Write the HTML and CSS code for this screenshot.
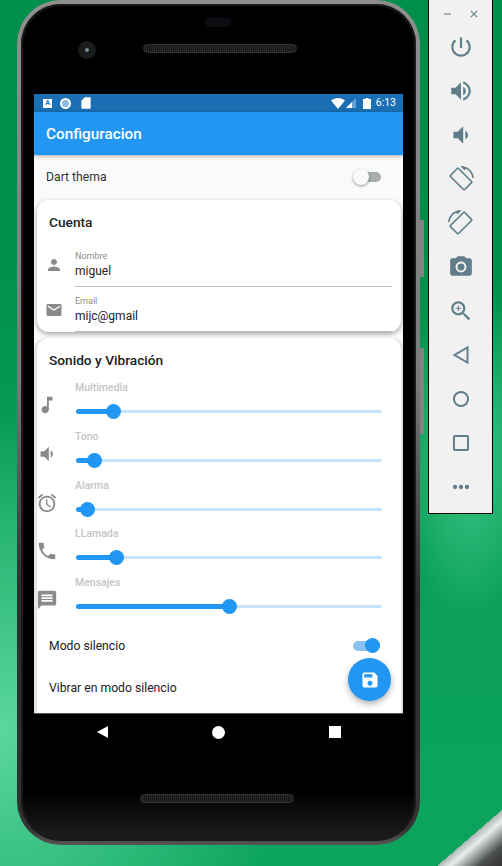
FILE: index.html
```html
<!DOCTYPE html>
<html lang="en">
<head>
    <meta charset="UTF-8">
    <meta name="viewport" content="width=device-width, initial-scale=1.0">
    <title>Configuracion</title>
    <link rel="stylesheet" href="styles.css">
</head>
<body>

<div class="desktop">
    <div class="metal"></div>

    <div class="phone">
        <div class="side-key key-top"></div>
        <div class="side-key key-volume"></div>

        <div class="phone-body">
            <div class="bezel-top">
                <div class="sensor"></div>
                <div class="camera"><span></span></div>
                <div class="grille"></div>
            </div>

            <div class="screen">
                <div class="status-bar">
                    <div class="status-left">
                        <span class="status-a">A</span>
                        <span class="status-dot"></span>
                        <svg class="status-icon" viewBox="0 0 24 24"><path fill="#fff" d="M18 2h-8L4 8v12c0 1.100.9 2 2 2h12c1.100 0 2-.9 2-2V4c0-1.100-.9-2-2-2z"/></svg>
                    </div>
                    <div class="status-right">
                        <svg class="status-wifi" viewBox="0 0 14 11"><path fill="#fff" d="M7 11L0 2.600C2 1 4.400 0 7 0s5 1 7 2.600z"/></svg>
                        <svg class="status-signal" viewBox="0 0 10 10"><path fill="#64a3dc" d="M10 0v10H0z"/><path fill="#fff" d="M6 4v6H0z"/></svg>
                        <svg class="status-battery" viewBox="0 0 8 11"><path fill="#fff" d="M2.500 0h3v1H8v10H0V1h2.500z"/></svg>
                        <span class="status-time">6:13</span>
                    </div>
                </div>

                <div class="app-bar">Configuracion</div>

                <div class="content">
                    <div class="theme-row">
                        <span>Dart thema</span>
                        <div class="switch switch-off"><span></span></div>
                    </div>

                    <div class="card card-account">
                        <h3 class="card-title">Cuenta</h3>
                        <div class="field">
                            <svg class="field-icon" viewBox="0 0 24 24"><path d="M12 12c2.210 0 4-1.790 4-4s-1.790-4-4-4-4 1.790-4 4 1.790 4 4 4zm0 2c-2.670 0-8 1.340-8 4v2h16v-2c0-2.660-5.330-4-8-4z"/></svg>
                            <div class="field-text">
                                <label>Nombre</label>
                                <div class="field-value">miguel</div>
                            </div>
                        </div>
                        <div class="field">
                            <svg class="field-icon" viewBox="0 0 24 24"><path d="M20 4H4c-1.100 0-1.990.9-1.990 2L2 18c0 1.100.9 2 2 2h16c1.100 0 2-.9 2-2V6c0-1.100-.9-2-2-2zm0 4l-8 5-8-5V6l8 5 8-5v2z"/></svg>
                            <div class="field-text">
                                <label>Email</label>
                                <div class="field-value">mijc@gmail</div>
                            </div>
                        </div>
                    </div>

                    <div class="card card-sound">
                        <h3 class="card-title">Sonido y Vibración</h3>

                        <div class="volume">
                            <svg class="volume-icon" viewBox="0 0 24 24"><path d="M12 3v10.550c-.59-.34-1.270-.55-2-.55-2.210 0-4 1.790-4 4s1.790 4 4 4 4-1.790 4-4V7h4V3h-6z"/></svg>
                            <div class="volume-main">
                                <label>Multimedia</label>
                                <div class="slider"><div class="slider-fill" style="width:12.1%"><span></span></div></div>
                            </div>
                        </div>
                        <div class="volume">
                            <svg class="volume-icon" viewBox="0 0 24 24"><path d="M18.500 12c0-1.770-1.020-3.290-2.500-4.030v8.050c1.480-.73 2.500-2.250 2.500-4.020zM5 9v6h4l5 5V4L9 9H5z"/></svg>
                            <div class="volume-main">
                                <label>Tono</label>
                                <div class="slider"><div class="slider-fill" style="width:6.2%"><span></span></div></div>
                            </div>
                        </div>
                        <div class="volume">
                            <svg class="volume-icon" viewBox="0 0 24 24"><path d="M22 5.720l-4.600-3.860-1.290 1.530 4.600 3.860L22 5.720zM7.880 3.390L6.600 1.860 2 5.710l1.290 1.530 4.590-3.850zM12.500 8H11v6l4.750 2.850.75-1.230-4-2.370V8zM12 4c-4.970 0-9 4.030-9 9s4.020 9 9 9c4.970 0 9-4.030 9-9s-4.030-9-9-9zm0 16c-3.870 0-7-3.130-7-7s3.130-7 7-7 7 3.130 7 7-3.130 7-7 7z"/></svg>
                            <div class="volume-main">
                                <label>Alarma</label>
                                <div class="slider"><div class="slider-fill" style="width:3.9%"><span></span></div></div>
                            </div>
                        </div>
                        <div class="volume">
                            <svg class="volume-icon" viewBox="0 0 24 24"><path d="M6.620 10.790c1.440 2.830 3.760 5.140 6.590 6.590l2.200-2.200c.27-.27.67-.36 1.020-.24 1.120.37 2.330.57 3.570.57.55 0 1 .45 1 1V20c0 .55-.45 1-1 1-9.390 0-17-7.610-17-17 0-.55.45-1 1-1h3.500c.55 0 1 .45 1 1 0 1.250.2 2.450.57 3.570.11.35.03.74-.25 1.020l-2.200 2.200z"/></svg>
                            <div class="volume-main">
                                <label>LLamada</label>
                                <div class="slider"><div class="slider-fill" style="width:13.1%"><span></span></div></div>
                            </div>
                        </div>
                        <div class="volume">
                            <svg class="volume-icon" viewBox="0 0 24 24"><path d="M20 2H4c-1.100 0-1.990.9-1.990 2L2 22l4-4h14c1.100 0 2-.9 2-2V4c0-1.100-.9-2-2-2zm-2 12H6v-2h12v2zm0-3H6V9h12v2zm0-3H6V6h12v2z"/></svg>
                            <div class="volume-main">
                                <label>Mensajes</label>
                                <div class="slider"><div class="slider-fill" style="width:50%"><span></span></div></div>
                            </div>
                        </div>

                        <div class="toggle-row">
                            <span>Modo silencio</span>
                            <div class="switch switch-on"><span></span></div>
                        </div>
                        <div class="toggle-row">
                            <span>Vibrar en modo silencio</span>
                        </div>
                    </div>

                    <button class="fab" type="button">
                        <svg viewBox="0 0 24 24"><path fill="#fff" d="M17 3H5c-1.110 0-2 .9-2 2v14c0 1.100.89 2 2 2h14c1.100 0 2-.9 2-2V7l-4-4zm-5 16c-1.660 0-3-1.340-3-3s1.340-3 3-3 3 1.340 3 3-1.340 3-3 3zm3-10H5V5h10v4z"/></svg>
                    </button>
                </div>
            </div>

            <div class="bezel-bottom">
                <div class="nav-buttons">
                    <span class="nav-back"></span>
                    <span class="nav-home"></span>
                    <span class="nav-recent"></span>
                </div>
                <div class="grille grille-bottom"></div>
            </div>
        </div>
    </div>

    <div class="toolbar">
        <div class="toolbar-head">
            <span class="toolbar-min"></span>
            <svg class="toolbar-close" viewBox="0 0 10 10"><path d="M1 1l8 8M9 1l-8 8"/></svg>
        </div>
        <svg class="tool" viewBox="0 0 24 24"><path d="M13 3h-2v10h2V3zm4.830 2.170l-1.420 1.420C17.990 7.860 19 9.810 19 12c0 3.870-3.130 7-7 7s-7-3.130-7-7c0-2.190 1.010-4.140 2.580-5.420L6.170 5.170C4.230 6.820 3 9.260 3 12c0 4.970 4.030 9 9 9s9-4.030 9-9c0-2.740-1.230-5.180-3.170-6.830z"/></svg>
        <svg class="tool" viewBox="0 0 24 24"><path d="M3 9v6h4l5 5V4L7 9H3zm13.500 3c0-1.770-1.020-3.290-2.500-4.030v8.050c1.480-.73 2.500-2.250 2.500-4.020zM14 3.230v2.060c2.890.86 5 3.540 5 6.710s-2.110 5.850-5 6.710v2.060c4.010-.91 7-4.490 7-8.770s-2.990-7.860-7-8.770z"/></svg>
        <svg class="tool" viewBox="0 0 24 24"><path d="M18.500 12c0-1.770-1.020-3.290-2.500-4.030v8.050c1.480-.73 2.500-2.250 2.500-4.020zM5 9v6h4l5 5V4L9 9H5z"/></svg>
        <svg class="tool" viewBox="0 0 24 24"><path d="M16.480 2.520c3.270 1.550 5.610 4.720 5.970 8.480h1.500C23.440 4.840 18.290 0 12 0l-.66.03 3.810 3.810 1.330-1.320zm-6.250-.77c-.59-.59-1.540-.59-2.120 0L1.750 8.110c-.59.59-.59 1.540 0 2.120l12.020 12.020c.59.59 1.540.59 2.120 0l6.360-6.360c.59-.59.59-1.540 0-2.120L10.230 1.750zm4.600 19.440L2.810 9.170l6.360-6.360 12.020 12.020-6.360 6.360z"/></svg>
        <svg class="tool tool-flip" viewBox="0 0 24 24"><path d="M16.480 2.520c3.270 1.550 5.610 4.720 5.970 8.480h1.500C23.440 4.840 18.290 0 12 0l-.66.03 3.810 3.810 1.330-1.320zm-6.250-.77c-.59-.59-1.540-.59-2.120 0L1.750 8.110c-.59.59-.59 1.540 0 2.120l12.020 12.020c.59.59 1.540.59 2.120 0l6.360-6.360c.59-.59.59-1.540 0-2.120L10.230 1.750zm4.600 19.440L2.810 9.170l6.360-6.360 12.020 12.020-6.360 6.360z"/></svg>
        <svg class="tool" viewBox="0 0 24 24"><circle cx="12" cy="12" r="3.200"/><path d="M9 2L7.170 4H4c-1.100 0-2 .9-2 2v12c0 1.100.9 2 2 2h16c1.100 0 2-.9 2-2V6c0-1.100-.9-2-2-2h-3.170L15 2H9zm3 15c-2.760 0-5-2.240-5-5s2.240-5 5-5 5 2.240 5 5-2.240 5-5 5z"/></svg>
        <svg class="tool" viewBox="0 0 24 24"><path d="M15.500 14h-.79l-.28-.27C15.410 12.590 16 11.110 16 9.500 16 5.910 13.090 3 9.500 3S3 5.910 3 9.500 5.910 16 9.500 16c1.610 0 3.090-.59 4.230-1.570l.27.28v.79l5 4.990L20.490 19l-4.990-5zm-6 0C7.010 14 5 11.990 5 9.500S7.010 5 9.500 5 14 7.010 14 9.500 11.990 14 9.500 14zM12 10h-2v2H9v-2H7V9h2V7h1v2h2v1z"/></svg>
        <svg class="tool tool-line" viewBox="0 0 24 24"><path d="M18 5v14L6 12z"/></svg>
        <svg class="tool tool-line" viewBox="0 0 24 24"><circle cx="12" cy="12" r="6.500"/></svg>
        <svg class="tool tool-line" viewBox="0 0 24 24"><rect x="5.500" y="5.500" width="13" height="13" rx="1"/></svg>
        <svg class="tool" viewBox="0 0 24 24"><circle cx="6.500" cy="12" r="2"/><circle cx="12" cy="12" r="2"/><circle cx="17.500" cy="12" r="2"/></svg>
    </div>
</div>

</body>
</html>
```

FILE: styles.css
```css
html, body {
    margin: 0;
    padding: 0;
}

body {
    font-family: Roboto, "Liberation Sans", sans-serif;
}

.desktop {
    position: relative;
    width: 502px;
    height: 866px;
    overflow: hidden;
    background:
        radial-gradient(ellipse 70px 170px at 470px 450px, rgba(72, 204, 144, 0.9) 0%, rgba(72, 204, 144, 0) 100%),
        radial-gradient(ellipse 290px 320px at 0 730px, #5ad79c 0%, rgba(90, 215, 156, 0) 100%),
        linear-gradient(#008f4a 0%, #008f4a 28%, #0a9f58 60%, #0ca45d 100%);
}

.metal {
    position: absolute;
    right: 0;
    bottom: 0;
    width: 65px;
    height: 56px;
    background: linear-gradient(to bottom right, transparent 50%, #aeb6b4 50%, #e8eded 60%, #8f9795 72%, #4a4e4d 82%, #333 100%);
}

/* phone */
.phone {
    position: absolute;
    left: 17px;
    top: 0;
    width: 403px;
    height: 845px;
    box-sizing: border-box;
    padding: 4px;
    background: linear-gradient(#8f8f8f 0%, #7a7a7a 45%, #2e2e2e 70%, #333 98%, #555 100%);
    border-radius: 44px;
}

.phone-body {
    height: 100%;
    display: flex;
    flex-direction: column;
    background: linear-gradient(#000 0%, #000 94%, #1e1e1e 100%);
    border-radius: 40px;
    box-shadow: inset 0 0 0 2px #1a1a1a;
    overflow: hidden;
}

.side-key {
    position: absolute;
    right: -4px;
    width: 4px;
    background: #808583;
}

.key-top {
    top: 220px;
    height: 57px;
}

.key-volume {
    top: 348px;
    height: 86px;
}

.bezel-top {
    position: relative;
    height: 90px;
    flex: none;
}

.sensor {
    position: absolute;
    left: 184px;
    top: 14px;
    width: 27px;
    height: 9px;
    border-radius: 5px;
    background: #0b0d12;
}

.camera {
    position: absolute;
    left: 57px;
    top: 37px;
    width: 18px;
    height: 18px;
    border-radius: 50%;
    background: #1b1c1e;
    display: flex;
    align-items: center;
    justify-content: center;
}

.camera span {
    width: 4px;
    height: 4px;
    border-radius: 50%;
    background: #6f8d99;
}

.grille {
    position: absolute;
    left: 122px;
    top: 40px;
    width: 154px;
    height: 9px;
    border-radius: 5px;
    background: repeating-linear-gradient(90deg, #2a2a2a 0, #2a2a2a 1px, #151515 1px, #151515 2px);
    border: 1px solid #333;
    box-sizing: border-box;
}

.screen {
    width: 369px;
    height: 619px;
    margin-left: 13px;
    flex: none;
    display: flex;
    flex-direction: column;
    overflow: hidden;
    background: #fafafa;
    box-shadow: 0 1px 0 #555;
}

.status-bar {
    height: 18px;
    flex: none;
    padding: 0 7px 0 9px;
    display: flex;
    align-items: center;
    justify-content: space-between;
    background: #1a6fb5;
}

.status-left,
.status-right {
    display: flex;
    align-items: center;
}

.status-left {
    gap: 7px;
}

.status-a {
    width: 9px;
    height: 9px;
    background: #fff;
    color: #1a6fb5;
    font-size: 7px;
    font-weight: 700;
    line-height: 9px;
    text-align: center;
}

.status-dot {
    width: 7px;
    height: 7px;
    margin-left: 1px;
    border: 2px solid #fff;
    border-radius: 50%;
    background: #8db9e2;
}

.status-icon {
    width: 14px;
    height: 14px;
    margin-left: 1px;
}

.status-wifi {
    width: 14px;
    height: 11px;
}

.status-signal {
    width: 10px;
    height: 10px;
    margin-left: 1px;
}

.status-battery {
    width: 8px;
    height: 11px;
    margin-left: 7px;
}

.status-time {
    margin-left: 5px;
    color: #fff;
    font-size: 10.5px;
    line-height: 18px;
}

.app-bar {
    height: 43px;
    flex: none;
    position: relative;
    padding-left: 12px;
    color: #fff;
    font-size: 15.3px;
    font-weight: 500;
    line-height: 45px;
    background: #2196f3;
    box-shadow: 0 1px 4px rgba(0, 0, 0, 0.35);
}

.content {
    position: relative;
    flex: 1;
    overflow: hidden;
}

.theme-row {
    height: 43px;
    margin-bottom: 2px;
    padding: 0 22px 0 12px;
    display: flex;
    align-items: center;
    justify-content: space-between;
    color: #333;
    font-size: 12.2px;
}

/* switches */
.switch {
    position: relative;
    width: 27px;
    height: 10px;
    border-radius: 5px;
}

.switch span {
    position: absolute;
    top: -3px;
    border-radius: 50%;
}

.switch-off {
    background: #a8adad;
}

.switch-off span {
    left: -1px;
    width: 16px;
    height: 16px;
    background: #fafafa;
    box-shadow: 0 1px 3px rgba(0, 0, 0, 0.4);
}

.switch-on {
    background: #8cc2ef;
}

.switch-on span {
    right: 0;
    top: -2.5px;
    width: 15px;
    height: 15px;
    background: #2196f3;
}

/* cards */
.card {
    margin: 0 2px 0 3px;
    background: #fff;
    border-radius: 12px;
}

.card-account {
    height: 132px;
    box-shadow: 0 2px 5px rgba(0, 0, 0, 0.35);
}

.card-sound {
    margin-top: 6px;
    height: 420px;
    border-radius: 12px 12px 0 0;
    box-shadow: -3px 0 0 #e4e4e4, 3px 0 0 #e4e4e4;
}

.card-title {
    margin: 0;
    padding: 14px 0 12px 12px;
    color: #212121;
    font-size: 13.7px;
    font-weight: 500;
    line-height: 16px;
}

.card-sound .card-title {
    padding-bottom: 13px;
}

.field {
    display: flex;
    align-items: center;
    height: 45px;
    padding-right: 9px;
}

.field-icon {
    width: 18px;
    height: 18px;
    margin: 0 12px 0 8px;
    fill: #8a8a8a;
    flex: none;
}

.field-text {
    flex: 1;
    height: 45px;
    box-sizing: border-box;
    padding-top: 9px;
    border-bottom: 1px solid #bdbdbd;
}

.field-text label {
    display: block;
    color: #8c8c8c;
    font-size: 9px;
    line-height: 11px;
}

.field-value {
    margin-top: 1px;
    color: #212121;
    font-size: 12px;
    line-height: 16px;
}

/* sliders */
.volume {
    display: flex;
    height: 48.75px;
    padding-right: 19px;
}

.volume-icon {
    width: 22px;
    height: 22px;
    margin: 13px 17px 0 -1px;
    fill: #8a8a8a;
    flex: none;
}

.volume-main {
    flex: 1;
}

.volume-main label {
    display: block;
    color: #c4c4c4;
    font-size: 10.5px;
    font-weight: 500;
    line-height: 14px;
}

.slider {
    height: 3px;
    margin: 15px 0 0 1px;
    border-radius: 2px;
    background: #c5e3fb;
}

.slider-fill {
    position: relative;
    top: -1px;
    height: 5px;
    border-radius: 3px;
    background: #2196f3;
}

.slider-fill span {
    position: absolute;
    right: -7.5px;
    top: -5px;
    width: 15px;
    height: 15px;
    border-radius: 50%;
    background: #2196f3;
}

.toggle-row {
    display: flex;
    align-items: center;
    justify-content: space-between;
    height: 42px;
    padding: 0 21px 0 12px;
    color: #212121;
    font-size: 12.2px;
}

.fab {
    position: absolute;
    right: 12px;
    bottom: 12px;
    width: 43px;
    height: 43px;
    padding: 0;
    border: none;
    border-radius: 50%;
    display: flex;
    align-items: center;
    justify-content: center;
    background: #2196f3;
    box-shadow: 0 3px 6px rgba(0, 0, 0, 0.3);
}

.fab svg {
    width: 20px;
    height: 20px;
}

.bezel-bottom {
    position: relative;
    flex: 1;
}

.nav-buttons {
    display: flex;
    justify-content: space-between;
    align-items: center;
    height: 38px;
    padding: 0 75px 0 76px;
}

.nav-back {
    width: 0;
    height: 0;
    border-style: solid;
    border-width: 6px 11px 6px 0;
    border-color: transparent #fff transparent transparent;
}

.nav-home {
    width: 13px;
    height: 13px;
    border-radius: 50%;
    background: #fff;
}

.nav-recent {
    width: 12px;
    height: 12px;
    background: #fff;
}

.grille-bottom {
    top: 81px;
    left: 119px;
}

/* emulator toolbar */
.toolbar {
    position: absolute;
    left: 428px;
    top: -2px;
    width: 63px;
    height: 514px;
    display: flex;
    flex-direction: column;
    align-items: center;
    background: #f1f1f1;
    border: 1px solid #000;
}

.toolbar-head {
    width: 100%;
    height: 22px;
    flex: none;
    box-sizing: border-box;
    padding-top: 8px;
    display: flex;
    align-items: center;
    justify-content: center;
    gap: 19px;
}

.toolbar-min {
    width: 7px;
    height: 2px;
    background: #9fb0b7;
}

.toolbar-close {
    width: 8px;
    height: 8px;
    fill: none;
    stroke: #6a7f89;
    stroke-width: 1.5;
}

.tool {
    width: 26px;
    height: 26px;
    margin-bottom: 18px;
    fill: #607d8b;
    flex: none;
}

.toolbar-head + .tool {
    margin-top: 13px;
}

.tool-flip {
    transform: scaleX(-1);
}

.tool-line {
    fill: none;
    stroke: #607d8b;
    stroke-width: 1.8;
}
```
